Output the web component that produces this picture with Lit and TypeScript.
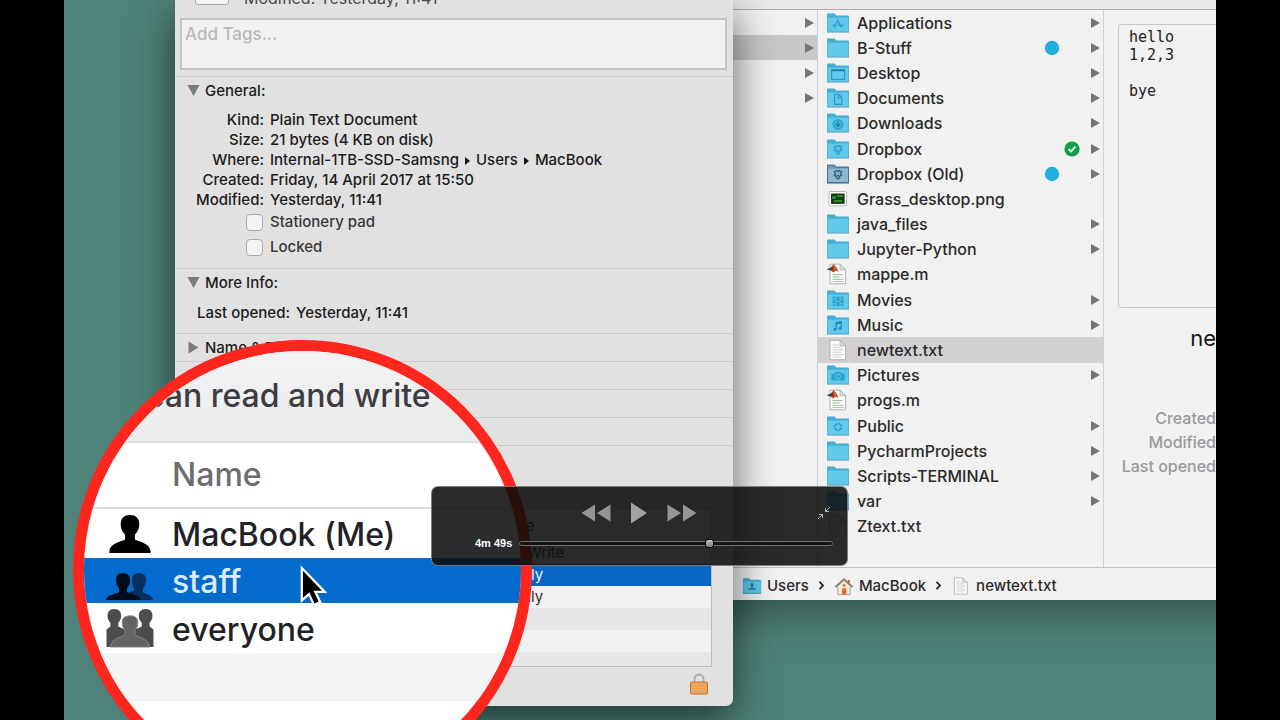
import { LitElement, html, css, svg, nothing } from "lit";
import { customElement, property } from "lit/decorators.js";
import { classMap } from "lit/directives/class-map.js";

type Entry = { name: string; icon: string; dir?: boolean; tag?: boolean; synced?: boolean; selected?: boolean };

const entries: Entry[] = [
  { name: "Applications", icon: "apps", dir: true },
  { name: "B-Stuff", icon: "folder", dir: true, tag: true },
  { name: "Desktop", icon: "desktop", dir: true },
  { name: "Documents", icon: "documents", dir: true },
  { name: "Downloads", icon: "downloads", dir: true },
  { name: "Dropbox", icon: "dropbox", dir: true, synced: true },
  { name: "Dropbox (Old)", icon: "dropboxold", dir: true, tag: true },
  { name: "Grass_desktop.png", icon: "image" },
  { name: "java_files", icon: "folder", dir: true },
  { name: "Jupyter-Python", icon: "folder", dir: true },
  { name: "mappe.m", icon: "matlab" },
  { name: "Movies", icon: "movies", dir: true },
  { name: "Music", icon: "music", dir: true },
  { name: "newtext.txt", icon: "text", selected: true },
  { name: "Pictures", icon: "pictures", dir: true },
  { name: "progs.m", icon: "matlab" },
  { name: "Public", icon: "public", dir: true },
  { name: "PycharmProjects", icon: "folder", dir: true },
  { name: "Scripts-TERMINAL", icon: "folder", dir: true },
  { name: "var", icon: "folder", dir: true },
  { name: "Ztext.txt", icon: "text" },
];

const line = "#2b9cc4";
const dropboxMark = (c: string) => svg`
  <path d="M8.2 9l2.4-1.4 1.4 1.2 1.400-1.200 2.400 1.400-1.500 1.500 1.500 1.500-2.400 1.400-1.400-1.200-1.400 1.200-2.400-1.400 1.500-1.500z M9.800 14.600l2.200 1.500 2.200-1.500" fill="none" stroke=${c} stroke-width="1.2"/>`;
const marks: Record<string, unknown> = {
  apps: svg`<path d="M12.2 7.6l-3.8 8.2M11.4 7.6l4.2 8.2M7 13.4h2.600M11.600 13.400h5.400M7 12.400v1.600M17.200 12.400v1.600" fill="none" stroke=${line} stroke-width="1.2"/>`,
  desktop: svg`<rect x="5.600" y="8" width="13" height="9.400" fill="none" stroke=${line} stroke-width="1.2"/><path d="M5.600 8.400h13" stroke="#17789e" stroke-width="1.600"/>`,
  documents: svg`<path d="M8.600 7.400h4.200l3 3v7H8.600zM12.400 7.400v3.400h3.400" fill="none" stroke=${line} stroke-width="1.2"/>`,
  downloads: svg`<circle cx="12" cy="12.400" r="4.800" fill="#43b4da" stroke=${line} stroke-width="1.2"/><path d="M12 9v4M9.600 12.200l2.400 2.800 2.400-2.800z" fill="#1f86ad" stroke="#1f86ad"/>`,
  dropbox: dropboxMark(line),
  dropboxold: dropboxMark("#2f5a78"),
  movies: svg`<rect x="6.600" y="7.600" width="11" height="9.400" fill="#2ba3cf"/><path d="M10 7.600v9.400M14.200 7.600v9.400M6.600 10h3.400M6.600 14.800h3.400M10 12.400h4.200M14.200 10h3.400M14.200 14.800h3.400" stroke="#62c8ea" stroke-width=".8"/>`,
  music: svg`<path d="M10.200 15V8.800l5-1.200v6.200M10.200 10l5-1.200" fill="none" stroke="#1f8cb8" stroke-width="1.2"/><ellipse cx="9" cy="15.400" rx="1.700" ry="1.300" fill="#1f8cb8"/><ellipse cx="14" cy="14.400" rx="1.700" ry="1.300" fill="#1f8cb8"/>`,
  pictures: svg`<path d="M5.400 9.400h3.200l1.200-1.600h4.600l1.200 1.600h3.200v7H5.400z" fill="#2ba3cf"/><circle cx="12.200" cy="12.600" r="2.400" fill="none" stroke="#62c8ea" stroke-width="1"/>`,
  public: svg`<path d="M12 7.600l4.400 4.400-4.400 4.400L7.600 12z" fill="none" stroke=${line} stroke-width="1.500" stroke-dasharray="4.400 1.800" stroke-dashoffset="-.9"/>`,
  users: svg`<circle cx="12" cy="9.400" r="2" fill="#1f86ad"/><path d="M11 11h2v2.400h3.400v2H7.600v-2H11z" fill="#1f86ad"/>`,
};

function fileIcon(kind: string) {
  if (kind === "image")
    return html`<svg class="icon" viewBox="0 0 24 22" aria-hidden="true">
      <rect x="3" y="3.500" width="17.600" height="14.400" rx="1" fill="#fff" stroke="#b9b9b9"/>
      <rect x="5" y="5.500" width="13.600" height="10.400" fill="#143d17"/>
      <path d="M6 8h4v3H6zM11 7h6v2h-6zM8 12h8v2H8z" fill="#2f8a35"/></svg>`;
  if (kind === "text" || kind === "matlab")
    return html`<svg class="icon" viewBox="0 0 24 22" aria-hidden="true">
      <path d="M4 1.200h10l5.600 5.600v14H4z" fill="#fbfbfb" stroke="#a9a9a9" stroke-width=".9"/>
      <path d="M14 1.200v5.600h5.600z" fill="#dedede" stroke="#a9a9a9" stroke-width=".7"/>
      ${kind === "text"
        ? svg`<path d="M6.400 6h6M6.400 8.400h9M6.400 10.800h11M6.400 13.200h9M6.400 15.600h11M6.400 18h8" stroke="#c6c6c6" stroke-width=".9"/>`
        : svg`<path d="M6.600 11.600h10M6.600 14h7" stroke="#8fc77f" stroke-width="1"/><path d="M6.600 16.400h11M6.600 18.600h11" stroke="#b0b0b0" stroke-width=".9"/>
            <path d="M.8 6.200l4-1.400L7.600 1l2.600 3 2.400 5-2.800-1.400-2.800 1.800-2-1.800z" fill="#c23c22"/><path d="M.8 6.200l4-1.400 1.400-1.400.8 3-2 1z" fill="#23415f"/><path d="M7.600 1l1.200 3.200-.6 3 1-.4.4-3z" fill="#f09a35"/>`}
    </svg>`;
  const old = kind === "dropboxold";
  return html`<svg class="icon" viewBox="0 0 24 22" aria-hidden="true">
    <path d="M1 19.600V2.600q0-1 1-1h6.200q.8 0 1.200.8l.8 1.200H22q1 0 1 1v15z" fill=${old ? "#6d9dbd" : "#45aed3"}/>
    <path d="M1.600 19V5.600h20.800V19z" fill=${old ? "#8fb9d2" : "#62c9eb"}/>
    <path d="M1 20h22" stroke=${old ? "#3f6f90" : "#369cc2"}/>
    ${old ? svg`<path d="M1.500 19.600V2.400h7l1.600 1.900h12.400v15.300z" fill="none" stroke="#47708e"/>` : nothing}
    ${marks[kind] ?? nothing}
  </svg>`;
}

const arrow = html`<svg class="arrow" viewBox="0 0 10 12" aria-hidden="true"><path d="M1 1l9 5-9 5z" fill="#757575"/></svg>`;

@customElement("info-window")
class InfoWindow extends LitElement {
  static styles = css`
    :host {
      display: flex; flex-direction: column; box-sizing: border-box; overflow: hidden;
      background: #e1e1e1; color: #1c1c1c; border-radius: 0 0 7px 7px;
      font: 500 15px/20px Inter, "Liberation Sans", sans-serif;
    }
    .summary { display: flex; align-items: flex-end; height: 8px; padding: 0 20px; gap: 15px; color: #4a4a4a; font-size: 16px; font-weight: 400; }
    .thumb { width: 32px; height: 24px; margin-bottom: 3px; background: #f4f4f4; border: 1px solid #a8a8a8; border-radius: 3px; }
    .tags { padding: 10px 6px 6px 5px; border-bottom: 1px solid #cbcbcb; display: flex; }
    textarea {
      flex: 1; box-sizing: border-box; height: 52px; resize: none; border: 2px solid #c3c3c3; background: #f1f1f1;
      padding: 3px 3px; font: 500 17px/22px Inter, "Liberation Sans", sans-serif; color: #333; margin: 0; outline: none;
    }
    textarea::placeholder { color: #b9b9b9; opacity: 1; }
    section { border-bottom: 1px solid #cbcbcb; }
    .heading {
      display: flex; align-items: center; gap: 5px; height: 27px; padding: 0 12px; border: 0; background: none;
      font: inherit; color: inherit; width: 100%; text-align: left;
    }
    .heading svg { width: 13px; height: 13px; }
    dl { margin: 0; display: grid; grid-template-columns: 89px 1fr; column-gap: 6px; padding-top: 6px; }
    dt { text-align: right; }
    dd { margin: 0; }
    .crumb { display: inline-block; width: 5px; height: 8px; margin: 0 6px; }
    .checks { display: flex; flex-direction: column; gap: 1px; padding: 0 0 9px 71px; }
    .checks label { display: flex; align-items: center; gap: 7px; height: 24px; color: #383838; }
    input {
      appearance: none; width: 17px; height: 17px; margin: 0; border: 1px solid #aaa; border-radius: 4px;
      background: #f4f4f4;
    }
    .more { grid-template-columns: 115px 1fr; padding: 7px 0 10px; }
    .sharing { padding: 62px 21px 0 20px; border: 0; }
    .frame { border: 1px solid #bdbdbd; height: 157px; overflow: hidden; background: #f1f1f1; }
    table { width: 100%; border-collapse: collapse; }
    td, th { padding: 0; height: 22px; text-align: left; font-weight: 400; color: #333; }
    th { height: 33px; }
    td:first-child, th:first-child { width: 277px; }
    .on td { background: #0867c5; color: #eaf2fb; }
    .alt td { background: #e6e6e8; }
    .foot { display: flex; justify-content: flex-end; padding: 5px 24px 0; }
    .lock { border: 0; padding: 0; background: none; width: 20px; height: 24px; }
  `;
  private heading(text: string, open: boolean) {
    return html`<button class="heading" aria-expanded=${open}>
      <svg viewBox="0 0 13 13" aria-hidden="true"><path d=${open ? "M.5 1h12l-6 11z" : "M1.500 .5l10 6-10 6z"} fill="#7a7a7a"/></svg>${text}
    </button>`;
  }
  render() {
    const crumb = html`<svg class="crumb" viewBox="0 0 5 8" aria-hidden="true"><path d="M0 0l5 4-5 4z" fill="#161616"/></svg>`;
    return html`
      <div class="summary"><span class="thumb"></span><span>Modified: Yesterday, 11:41</span></div>
      <div class="tags"><textarea aria-label="Tags" placeholder="Add Tags..."></textarea></div>
      <section>
        ${this.heading("General:", true)}
        <dl>
          <dt>Kind:</dt><dd>Plain Text Document</dd>
          <dt>Size:</dt><dd>21 bytes (4 KB on disk)</dd>
          <dt>Where:</dt><dd>Internal-1TB-SSD-Samsng${crumb}Users${crumb}MacBook</dd>
          <dt>Created:</dt><dd>Friday, 14 April 2017 at 15:50</dd>
          <dt>Modified:</dt><dd>Yesterday, 11:41</dd>
        </dl>
        <div class="checks">
          <label><input type="checkbox" />Stationery pad</label>
          <label><input type="checkbox" />Locked</label>
        </div>
      </section>
      <section>
        ${this.heading("More Info:", true)}
        <dl class="more"><dt>Last opened:</dt><dd>Yesterday, 11:41</dd></dl>
      </section>
      <section>${this.heading("Name & Extension:", false)}</section>
      <section>${this.heading("", false)}</section>
      <section>${this.heading("", false)}</section>
      <section>${this.heading("", false)}</section>
      <section class="sharing">
        <div class="frame">
          <table>
            <tr><th></th><th>Privilege</th></tr>
            <tr><td></td><td>Read &amp; Write</td></tr>
            <tr class="on"><td></td><td>Read only</td></tr>
            <tr><td></td><td>Read only</td></tr>
            <tr class="alt"><td></td><td></td></tr>
            <tr><td></td><td></td></tr>
            <tr class="alt"><td></td><td></td></tr>
          </table>
        </div>
      </section>
      <div class="foot">
        <button class="lock" aria-label="Lock">
          <svg viewBox="0 0 20 24" width="20" height="24" aria-hidden="true">
            <path d="M5.500 12V7a4.500 4.500 0 0 1 9 0V12" fill="none" stroke="#a9a9a9" stroke-width="1.800"/>
            <rect x="1.500" y="10" width="17" height="12" rx="1" fill="#f2a75f" stroke="#b97838"/>
            <path d="M2.500 13.500h15M2.500 16.500h15M2.500 19.500h15" stroke="#e39a55" stroke-width=".8"/>
          </svg>
        </button>
      </div>`;
  }
}

@customElement("finder-window")
class FinderWindow extends LitElement {
  static styles = css`
    :host {
      display: grid; grid-template-rows: 10px 1fr 33px; background: #f1f1f1; color: #2a2a2a;
      font: 500 16px/24px Inter, "Liberation Sans", sans-serif;
    }
    .toolbar { background: #e9e7ea; border-bottom: 1px solid #adabae; }
    .columns { display: grid; grid-template-columns: 1fr 286px 288px; min-height: 0; }
    ul { margin: 0; padding: 0 0 28px; list-style: none; border-right: 1px solid #cfcfcf; display: flex; flex-direction: column; }
    li { flex: 1; display: flex; align-items: center; padding: 0 3px 0 8px; gap: 7px; min-height: 0; }
    .parents li { flex: none; height: 25px; justify-content: flex-end; padding-right: 3px; }
    .parents .selected { background: #c9c7ca; }
    .files .selected { background: #d2d0d3; }
    .icon { width: 24px; height: 22px; flex: none; }
    .name { flex: 1; white-space: nowrap; }
    .arrow { width: 10px; height: 12px; flex: none; }
    .badges { display: grid; grid-template-columns: 20px 20px; justify-items: center; width: 40px; margin-right: 1px; }
    .badges svg { width: 16px; height: 16px; grid-row: 1; }
    .badges .tag { grid-column: 1; }
    .badges .synced { grid-column: 2; }
    .blank { width: 10px; }
    .preview { padding: 14px; display: flex; flex-direction: column; }
    pre {
      margin: 0 0 14px; height: 279px; border: 1px solid #c6c6c6; border-radius: 3px; padding: 3px 10px 0;
      font: 15px/18px "DejaVu Sans Mono", monospace; color: #222;
    }
    h2 { margin: 0 0 52px; font: 22px/32px Inter, sans-serif; text-align: center; color: #161616; }
    dl { margin: 0; color: #9a9a9c; }
    dt { width: 98px; display: flex; justify-content: flex-end; white-space: nowrap; }
    nav { display: flex; align-items: center; border-top: 1px solid #c0c0c0; padding: 3px 0 0 82px; font-size: 15px; }
    nav a { display: flex; align-items: center; gap: 5px; color: inherit; text-decoration: none; }
    nav .icon { width: 20px; height: 20px; }
    .chev { width: 7px; height: 9px; margin: 0 9px; }
  `;
  render() {
    const chev = html`<svg class="chev" viewBox="0 0 7 9" aria-hidden="true"><path d="M1.500 .8L5 4.500 1.500 8.200" fill="none" stroke="#222" stroke-width="1.800"/></svg>`;
    return html`
      <div class="toolbar"></div>
      <div class="columns">
        <ul class="parents">
          <li>${arrow}</li>
          <li class="selected">${arrow}</li>
          <li>${arrow}</li>
          <li>${arrow}</li>
        </ul>
        <ul class="files">
          ${entries.map(
            (e) => html`<li class=${classMap({ selected: !!e.selected })}>
              ${fileIcon(e.icon)}
              <span class="name">${e.name}</span>
              ${e.tag || e.synced
                ? html`<span class="badges">
                    ${e.tag ? html`<svg class="tag" viewBox="0 0 16 16"><circle cx="8" cy="8" r="7.200" fill="#22aedf"/></svg>` : nothing}
                    ${e.synced
                      ? html`<svg class="synced" viewBox="0 0 16 16"><circle cx="8" cy="8" r="7.600" fill="#0f9d4b"/><path d="M4.500 8l2.500 2.500 4.500-5" fill="none" stroke="#d8f5e2" stroke-width="2"/></svg>`
                      : nothing}
                  </span>`
                : nothing}
              ${e.dir ? arrow : html`<span class="blank"></span>`}
            </li>`
          )}
        </ul>
        <div class="preview">
          <pre>${"hello\n1,2,3\n\nbye"}</pre>
          <h2>newtext.txt</h2>
          <dl><dt>Created</dt><dt>Modified</dt><dt>Last opened</dt></dl>
        </div>
      </div>
      <nav aria-label="Path">
        <a href="#users">${fileIcon("users")}Users</a>${chev}
        <a href="#macbook"><svg class="icon" viewBox="0 0 21 20" aria-hidden="true">
          <path d="M4 9.500L10.500 4l6.500 5.500V19H4z" fill="#f1ead9" stroke="#9b8f80" stroke-width=".8"/>
          <path d="M14.500 3.500h2V8h-2z" fill="#b5623c"/>
          <path d="M1.500 11L10.500 3l9 8" fill="none" stroke="#8f7f74" stroke-width="2"/>
          <rect x="8.500" y="12.500" width="4.500" height="6.500" fill="#e0662c"/><circle cx="10.600" cy="9.500" r="1.500" fill="#d9774c"/></svg>MacBook</a>${chev}
        <a href="#newtext">${fileIcon("text")}newtext.txt</a>
      </nav>`;
  }
}

@customElement("zoom-lens")
class ZoomLens extends LitElement {
  static styles = css`
    :host {
      display: block; box-sizing: border-box; border: 11px solid #ff261d; border-radius: 50%; overflow: hidden;
      background: #fff; color: #222226; font: 500 32px/40px Inter, "Liberation Sans", sans-serif;
    }
    .caption {
      margin: 0; height: 92px; box-sizing: border-box; padding: 25px 0 0 62px; background: linear-gradient(#f3f3f6, #ebebeb);
      border-bottom: 2px solid #dcdcdc; white-space: nowrap; color: #3c3c42;
    }
    table { width: 100%; border-collapse: collapse; }
    th, td { box-sizing: border-box; padding: 3px 0 0; text-align: left; font-weight: 500; height: 50px; }
    th { height: 65px; padding: 0; color: #6c6c70; border-bottom: 2px solid #dcdcdc; }
    .pic { width: 88px; padding: 0; }
    .pic svg { display: block; width: 52px; height: 45px; margin-left: 20px; }
    .on td { background: #026bcd; color: #dcebfb; height: 45px; }
    .alt td { background: #f4f4f7; height: 48px; }
  `;
  render() {
    return html`
      <p class="caption">can read and write</p>
      <table>
        <tr><th class="pic"></th><th>Name</th></tr>
        <tr>
          <td class="pic"><svg viewBox="0 0 52 46" aria-hidden="true">
            <path d="M26 4c6 0 9.500 3.500 9.500 9 0 6-2.500 9-4.500 11v5c1 2 15 3 16 12v2H5v-2c1-9 15-10 16-12v-5c-2-2-4.500-5-4.500-11 0-5.500 3.500-9 9.500-9z" fill="#000"/></svg></td>
          <td>MacBook (Me)</td>
        </tr>
        <tr class="on">
          <td class="pic"><svg viewBox="0 0 52 45" aria-hidden="true">
            <path d="M35 15c5 0 7 3 7 7 0 5-2 7-3 8v4c1 2 9 2 10 8H25v-8l5-1v-3c-1-1-2-3-2-8 0-4 2-7 7-7z" fill="#052f5c"/>
            <path d="M19 15c5 0 7 3 7 7 0 5-2 7-3 8v4c1 2 13 2 14 8H2c1-6 12-6 13-8v-4c-1-1-3-3-3-8 0-4 2-7 7-7z" fill="#020d1a"/></svg></td>
          <td>staff</td>
        </tr>
        <tr>
          <td class="pic"><svg viewBox="0 0 52 46" aria-hidden="true">
            <path d="M10 3c5 0 7 3 7 7s-2 6-3 7v4l9 4v17H2V24l4-3v-4c-1-1-3-3-3-7s2-7 7-7zM42 3c5 0 7 3 7 7s-2 6-3 7v4l4 3v18H29V25l9-4v-4c-1-1-3-3-3-7s2-7 7-7z" fill="#4c4c4c"/>
            <path d="M26 10c6 0 8 3 8 7s-2 7-3 8v4c1 3 14 3 15 13H6c1-10 14-10 15-13v-4c-1-1-3-4-3-8s2-7 8-7z" fill="#636363" stroke="#8b8b8b" stroke-width="1"/></svg></td>
          <td>everyone</td>
        </tr>
        <tr class="alt"><td></td><td></td></tr>
      </table>`;
  }
}

@customElement("player-bar")
class PlayerBar extends LitElement {
  @property({ type: Number }) position = 61;
  static styles = css`
    :host {
      display: flex; flex-direction: column; box-sizing: border-box; border: 1px solid rgba(160, 160, 160, 0.7);
      border-radius: 7px; background: rgba(12, 12, 12, 0.87); padding: 0 14px 0 43px;
      font: bold 11px/16px "Liberation Sans", Arial, sans-serif; color: #fff;
    }
    .row { display: flex; align-items: center; height: 50px; box-sizing: border-box; padding: 2px 2px 0 0; }
    .transport { flex: 1; display: flex; justify-content: center; align-items: center; gap: 20px; padding-right: 14px; }
    button { border: 0; background: none; padding: 0; display: block; }
    button svg { display: block; }
    .seek { display: flex; align-items: center; gap: 7px; height: 12px; }
    .seek label { white-space: nowrap; }
    input { appearance: none; flex: 1; min-width: 0; height: 9px; margin: 0; background: transparent; }
    input::-webkit-slider-runnable-track {
      box-sizing: border-box; height: 5px; background: #161616; border: 1px solid #707070; border-radius: 3px;
    }
    input::-webkit-slider-thumb {
      appearance: none; box-sizing: border-box; width: 9px; height: 9px; margin-top: -3px; border-radius: 3px;
      border: 1px solid #000; background: linear-gradient(#c8c8c8, #777);
    }
  `;
  render() {
    return html`
      <div class="row">
        <div class="transport">
          <button aria-label="Rewind"><svg width="30" height="20" viewBox="0 0 30 20"><path d="M14 1.500v17L.5 10zM29.500 1.500v17L16 10z" fill="#959595"/></svg></button>
          <button aria-label="Play"><svg width="16" height="22" viewBox="0 0 16 22"><path d="M0 .5v21L16 11z" fill="#a2a2a2"/></svg></button>
          <button aria-label="Fast forward"><svg width="30" height="20" viewBox="0 0 30 20"><path d="M.5 1.500v17L14 10zM16 1.500v17L29.500 10z" fill="#959595"/></svg></button>
        </div>
        <button aria-label="Exit full screen"><svg width="14" height="14" viewBox="0 0 14 14"><path d="M13 1L8.500 5.500M8.500 2v3.500H12M1 13l4.500-4.500M2 8.500h3.500V12" fill="none" stroke="#b5b5b5" stroke-width="1"/></svg></button>
      </div>
      <div class="seek">
        <label for="seek">4m 49s</label>
        <input id="seek" type="range" min="0" max="100" .value=${String(this.position)} />
      </div>`;
  }
}

@customElement("app-root")
class AppRoot extends LitElement {
  static styles = css`
    :host { display: grid; grid-template-columns: 5% 1fr 5%; height: 100vh; background: #000; }
    .desktop { grid-column: 2; position: relative; overflow: hidden; background: #4f8379; }
    .finder { position: absolute; left: 596px; right: -176px; top: 0; height: 600px; box-shadow: 0 12px 44px rgba(0, 0, 0, 0.4); }
    .info { position: absolute; left: 111px; top: 0; width: 558px; height: 706px; box-shadow: 0 14px 44px rgba(0, 0, 0, 0.6); }
    .lens { position: absolute; left: 9px; top: 340px; width: 459px; height: 459px; }
    .cursor { position: absolute; left: 236px; top: 565px; width: 27px; height: 42px; }
    .player { position: absolute; left: 367px; top: 486px; width: 417px; height: 80px; }
  `;
  render() {
    return html`<main class="desktop">
      <finder-window class="finder"></finder-window>
      <info-window class="info"></info-window>
      <zoom-lens class="lens"></zoom-lens>
      <svg class="cursor" viewBox="0 0 30 46" aria-hidden="true">
        <path d="M2 3v36l8-7 5.500 12 7-3L17 29.500h10.500z" fill="#000" stroke="#fff" stroke-width="2.500"/>
      </svg>
      <player-bar class="player"></player-bar>
    </main>`;
  }
}
